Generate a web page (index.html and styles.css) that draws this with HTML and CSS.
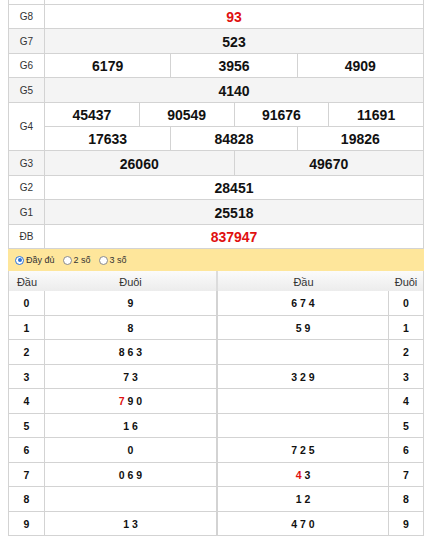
FILE: index.html
```html
<!DOCTYPE html>
<html>
<head>
<meta charset="utf-8">
<link rel="stylesheet" href="styles.css">
</head>
<body>
<div class="wrap">
  <div class="kq">
    <div class="row cut"><div class="lbl"></div><div class="vals"></div></div>
    <div class="row"><div class="lbl">G8</div><div class="vals"><span class="n red">93</span></div></div>
    <div class="row alt"><div class="lbl">G7</div><div class="vals"><span class="n">523</span></div></div>
    <div class="row"><div class="lbl">G6</div><div class="vals"><span class="n">6179</span><span class="n">3956</span><span class="n">4909</span></div></div>
    <div class="row alt"><div class="lbl">G5</div><div class="vals"><span class="n">4140</span></div></div>
    <div class="row g4"><div class="lbl">G4</div>
      <div class="stack">
        <div class="vals sub"><span class="n">45437</span><span class="n">90549</span><span class="n">91676</span><span class="n">11691</span></div>
        <div class="vals"><span class="n">17633</span><span class="n">84828</span><span class="n">19826</span></div>
      </div>
    </div>
    <div class="row alt"><div class="lbl">G3</div><div class="vals"><span class="n">26060</span><span class="n">49670</span></div></div>
    <div class="row"><div class="lbl">G2</div><div class="vals"><span class="n">28451</span></div></div>
    <div class="row alt"><div class="lbl">G1</div><div class="vals"><span class="n">25518</span></div></div>
    <div class="row"><div class="lbl">ĐB</div><div class="vals"><span class="n red">837947</span></div></div>
  </div>

  <div class="opts">
    <label class="opt"><span class="radio on"></span>Đầy đủ</label>
    <label class="opt"><span class="radio"></span>2 số</label>
    <label class="opt"><span class="radio"></span>3 số</label>
  </div>

  <div class="loto">
    <div class="lrow head"><div class="c1">Đầu</div><div class="c2">Đuôi</div><div class="c3">Đầu</div><div class="c4">Đuôi</div></div>
    <div class="lrow"><div class="c1">0</div><div class="c2">9</div><div class="c3">6 7 4</div><div class="c4">0</div></div>
    <div class="lrow"><div class="c1">1</div><div class="c2">8</div><div class="c3">5 9</div><div class="c4">1</div></div>
    <div class="lrow"><div class="c1">2</div><div class="c2">8 6 3</div><div class="c3"></div><div class="c4">2</div></div>
    <div class="lrow"><div class="c1">3</div><div class="c2">7 3</div><div class="c3">3 2 9</div><div class="c4">3</div></div>
    <div class="lrow"><div class="c1">4</div><div class="c2"><span><span class="red">7</span> 9 0</span></div><div class="c3"></div><div class="c4">4</div></div>
    <div class="lrow"><div class="c1">5</div><div class="c2">1 6</div><div class="c3"></div><div class="c4">5</div></div>
    <div class="lrow"><div class="c1">6</div><div class="c2">0</div><div class="c3">7 2 5</div><div class="c4">6</div></div>
    <div class="lrow"><div class="c1">7</div><div class="c2">0 6 9</div><div class="c3"><span><span class="red">4</span> 3</span></div><div class="c4">7</div></div>
    <div class="lrow"><div class="c1">8</div><div class="c2"></div><div class="c3">1 2</div><div class="c4">8</div></div>
    <div class="lrow"><div class="c1">9</div><div class="c2">1 3</div><div class="c3">4 7 0</div><div class="c4">9</div></div>
  </div>
</div>
</body>
</html>
```

FILE: styles.css
```css
* { box-sizing: border-box; }
html, body { margin: 0; padding: 0; background: #fff; }
body { font-family: "Liberation Sans", Arial, sans-serif; color: #111; }
.wrap { width: 416px; margin-left: 8px; }

.kq { border-left: 1px solid #d3d3d3; border-right: 1px solid #d3d3d3; }
.row { display: flex; height: 24.5px; border-bottom: 1px solid #d3d3d3; background: #fff; }
.row.alt { background: #f4f4f4; }
.row.cut { height: 4.5px; }
.row.g4 { height: 48.5px; }
.lbl { width: 36px; flex: none; border-right: 1px solid #d3d3d3; display: flex; align-items: center; justify-content: center; font-size: 10px; color: #333; padding-top: 1px; }
.vals { flex: 1; display: flex; }
.stack { flex: 1; display: flex; flex-direction: column; }
.stack .vals { flex: 1; }
.vals.sub { border-bottom: 1px solid #d3d3d3; }
.n { flex: 1; display: flex; align-items: center; justify-content: center; font-size: 14px; font-weight: bold; color: #111; border-left: 1px solid #d3d3d3; padding-top: 2px; }
.n:first-child { border-left: none; }
.red { color: #e01010; }

.opts { height: 22px; background: #fee69b; display: flex; align-items: center; padding-left: 7px; gap: 8px; font-size: 9px; color: #333; }
.opt { display: flex; align-items: center; gap: 2px; }
.radio { width: 9px; height: 9px; border-radius: 50%; border: 1px solid #8a8a8a; background: #fff; display: inline-block; position: relative; }
.radio.on { border-color: #2a72d8; }
.radio.on::after { content: ""; position: absolute; left: 1.5px; top: 1.5px; width: 4px; height: 4px; border-radius: 50%; background: #2a72d8; }

.loto { border-left: 1px solid #d3d3d3; border-right: 1px solid #d3d3d3; }
.lrow { display: grid; grid-template-columns: 36px 172px 172px 34px; height: 24.5px; border-bottom: 1px solid #d3d3d3; }
.lrow > div { display: flex; align-items: center; justify-content: center; font-size: 10.5px; font-weight: bold; color: #111; padding-top: 1px; white-space: pre; }
.lrow .c1 { border-right: 1px solid #d3d3d3; }
.lrow .c2 { border-right: 1px solid #d3d3d3; }
.lrow .c3 { border-left: 1px solid #d3d3d3; border-right: 1px solid #d3d3d3; }
.lrow.head { height: 20px; background: linear-gradient(#fbfbfb, #ececec); border-bottom: none; }
.lrow.head > div { font-weight: normal; font-size: 11px; color: #333; border-right: none; }
.lrow.head .c1, .lrow.head .c3 { border-left: none; }
.lrow.head .c2 { border-right: 1px solid #dcdcdc; }
.lrow.head .c3 { border-left: 1px solid #dcdcdc; }
```
